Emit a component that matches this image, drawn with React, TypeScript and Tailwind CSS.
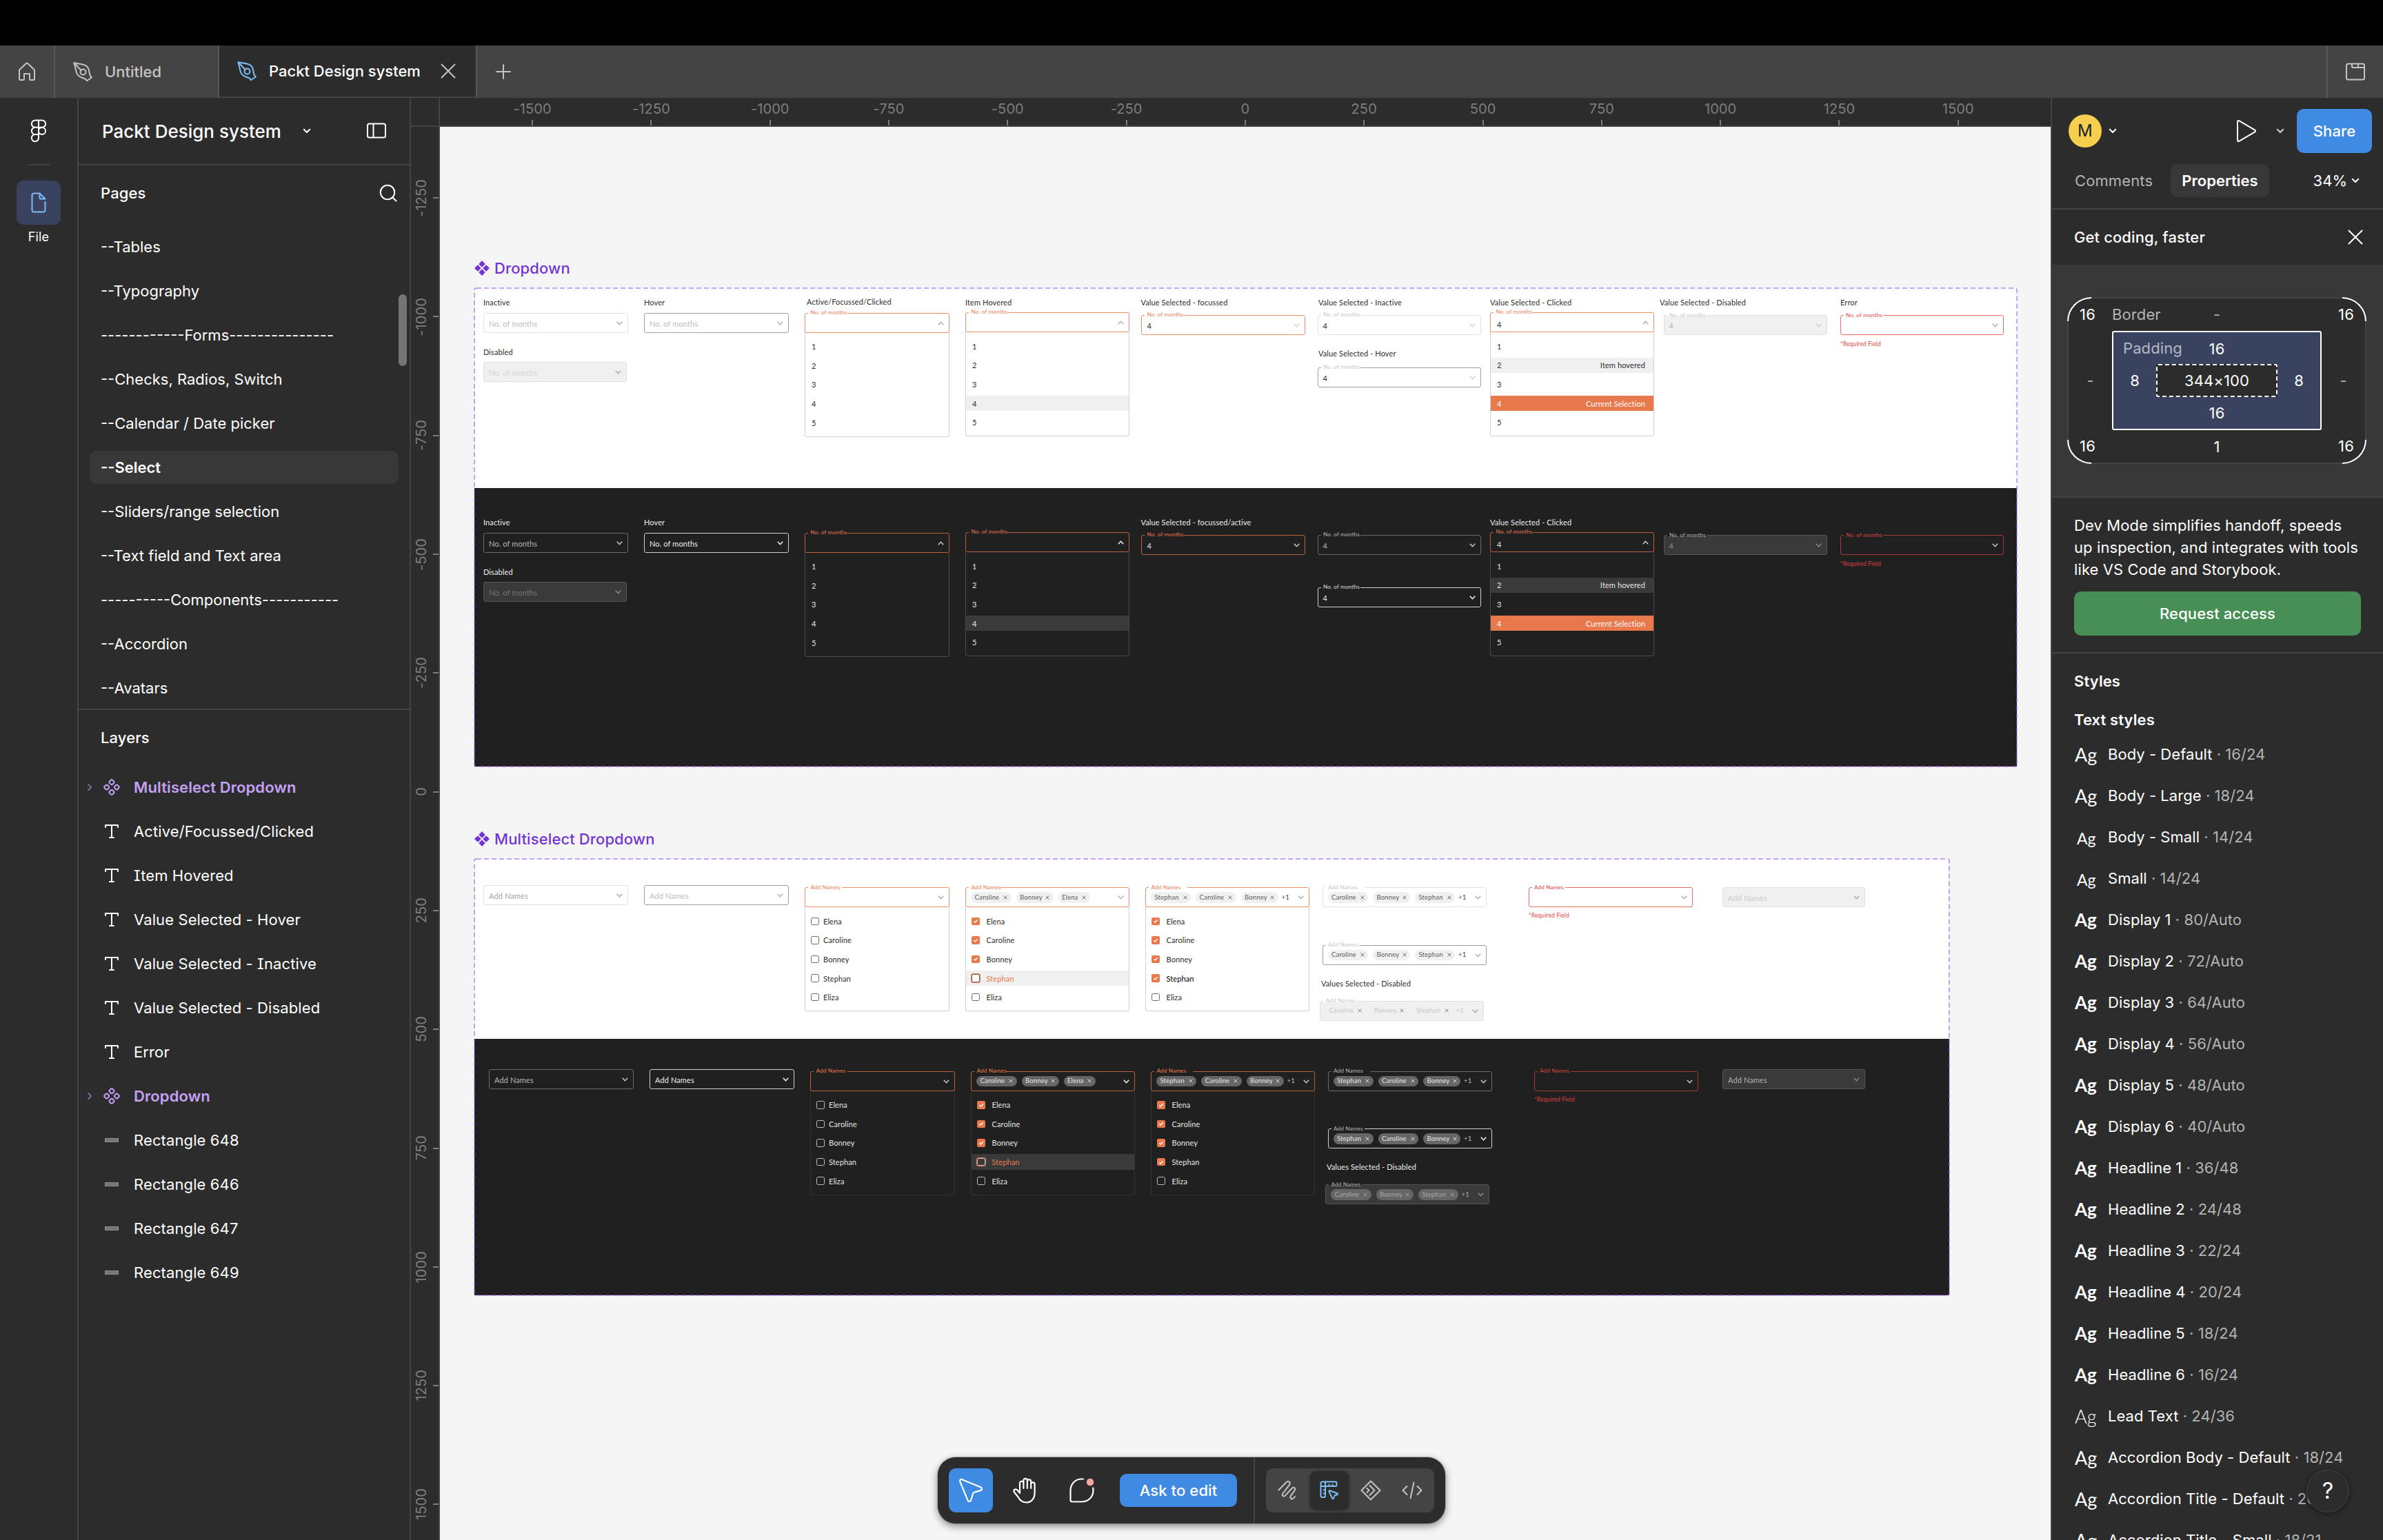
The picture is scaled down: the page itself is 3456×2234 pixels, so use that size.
import { ReactNode } from "react";
import clsx from "clsx";

const pages = [
  "--Tables",
  "--Typography",
  "------------Forms---------------",
  "--Checks, Radios, Switch",
  "--Calendar / Date picker",
  "--Select",
  "--Sliders/range selection",
  "--Text field and Text area",
  "----------Components-----------",
  "--Accordion",
  "--Avatars",
];

const layers = [
  { type: "component", name: "Multiselect Dropdown" },
  { type: "text", name: "Active/Focussed/Clicked" },
  { type: "text", name: "Item Hovered" },
  { type: "text", name: "Value Selected - Hover" },
  { type: "text", name: "Value Selected - Inactive" },
  { type: "text", name: "Value Selected - Disabled" },
  { type: "text", name: "Error" },
  { type: "component", name: "Dropdown" },
  { type: "rect", name: "Rectangle 648" },
  { type: "rect", name: "Rectangle 646" },
  { type: "rect", name: "Rectangle 647" },
  { type: "rect", name: "Rectangle 649" },
];

const textStyles = [
  { name: "Body - Default", size: "16/24", ag: "text-[27px]" },
  { name: "Body - Large", size: "18/24", ag: "text-[27px]" },
  { name: "Body - Small", size: "14/24", ag: "text-[23px] pt-1 pl-[3px]" },
  { name: "Small", size: "14/24", ag: "text-[23px] pt-1 pl-[3px]" },
  { name: "Display 1", size: "80/Auto", ag: "text-[26px] font-bold" },
  { name: "Display 2", size: "72/Auto", ag: "text-[26px] font-bold" },
  { name: "Display 3", size: "64/Auto", ag: "text-[26px] font-bold" },
  { name: "Display 4", size: "56/Auto", ag: "text-[26px] font-bold" },
  { name: "Display 5", size: "48/Auto", ag: "text-[26px] font-bold" },
  { name: "Display 6", size: "40/Auto", ag: "text-[26px] font-bold" },
  { name: "Headline 1", size: "36/48", ag: "text-[26px] font-bold" },
  { name: "Headline 2", size: "24/48", ag: "text-[26px] font-bold" },
  { name: "Headline 3", size: "22/24", ag: "text-[26px] font-bold" },
  { name: "Headline 4", size: "20/24", ag: "text-[26px] font-bold" },
  { name: "Headline 5", size: "18/24", ag: "text-[26px] font-bold" },
  { name: "Headline 6", size: "16/24", ag: "text-[26px] font-bold" },
  { name: "Lead Text", size: "24/36", ag: "text-[27px] font-light" },
  { name: "Accordion Body - Default", size: "18/24", ag: "text-[27px]" },
  { name: "Accordion Title - Default", size: "20/24", ag: "text-[27px]" },
  { name: "Accordion Title - Small", size: "18/21", ag: "text-[27px]" },
];

const rulerX = [-1500, -1250, -1000, -750, -500, -250, 0, 250, 500, 750, 1000, 1250, 1500];
const rulerY = [-1250, -1000, -750, -500, -250, 0, 250, 500, 750, 1000, 1250, 1500];

/* ---------- icons ---------- */

interface IconProps {
  w: number;
  h: number;
  className?: string;
  sw?: number;
  children: ReactNode;
}

function Icon({ w, h, className, sw = 2, children }: IconProps) {
  return (
    <svg
      width={w}
      height={h}
      viewBox={`0 0 ${w} ${h}`}
      fill="none"
      stroke="currentColor"
      strokeWidth={sw}
      strokeLinecap="round"
      strokeLinejoin="round"
      className={clsx("shrink-0", className)}
    >
      {children}
    </svg>
  );
}

function PenIcon({ className }: { className?: string }) {
  return (
    <Icon w={30} h={30} className={className}>
      <path d="M2.5 2.2L15 4.6c5 1 8 3.600 9 8.400l1.500 7.500 2.500 2.800-7.200 5-1.800-2.800-5.500-2C9.500 22 7.200 20 6 16.500z" />
      <path d="M2.500 2.200l10.300 11" />
      <circle cx="15.500" cy="15.500" r="4" />
    </Icon>
  );
}

function Chevron({ className }: { className?: string }) {
  return (
    <Icon w={12} h={8} className={className}>
      <path d="M1.800 1.800L6 6l4.200-4.200" />
    </Icon>
  );
}

function Cross({ className }: { className?: string }) {
  return (
    <Icon w={22} h={22} className={className}>
      <path d="M1.500 1.500l19 19M20.500 1.500l-19 19" />
    </Icon>
  );
}

function FilledComponent() {
  return (
    <svg width="22" height="22" viewBox="0 0 22 22" fill="currentColor">
      <path d="M11 0l4.700 4.900L11 9.800 6.300 4.900zM11 12.200l4.700 4.900L11 22l-4.700-4.900zM4.900 6.300L9.800 11l-4.900 4.700L0 11zM17.100 6.300L22 11l-4.900 4.700-4.900-4.700z" />
    </svg>
  );
}

function LayerIcon({ type }: { type: string }) {
  if (type === "component") {
    return (
      <Icon w={24} h={24} className="text-[#c4a1f5]">
        <rect x="9" y="1.700" width="6" height="6" rx="2" transform="rotate(45 12 4.700)" />
        <rect x="9" y="16.300" width="6" height="6" rx="2" transform="rotate(45 12 19.300)" />
        <rect x="1.700" y="9" width="6" height="6" rx="2" transform="rotate(45 4.700 12)" />
        <rect x="16.300" y="9" width="6" height="6" rx="2" transform="rotate(45 19.300 12)" />
      </Icon>
    );
  }
  if (type === "text") {
    return (
      <Icon w={24} h={24} className="text-white">
        <path d="M3 6V3h18v3M12 3v18M9 21h6" />
      </Icon>
    );
  }
  return <div className="mx-0.5 h-1.5 w-5 border border-[#8f8f8f] bg-[#767676]" />;
}

/* ---------- canvas pieces ---------- */

interface TxtProps {
  x: number;
  y: number;
  className?: string;
  children: ReactNode;
}

// y is the vertical centre of the line
function Txt({ x, y, className, children }: TxtProps) {
  return (
    <span
      className={clsx(
        "absolute -translate-y-1/2 leading-none whitespace-nowrap",
        className,
      )}
      style={{ left: x, top: y }}
    >
      {children}
    </span>
  );
}

interface FieldProps {
  x: number;
  y: number;
  w: number;
  h?: number;
  box: string;
  icon: string;
  up?: boolean;
  legend?: string;
  legendText?: string;
  gap?: number;
  bg?: string;
  children?: ReactNode;
}

function Field({
  x,
  y,
  w,
  h = 29,
  box,
  icon,
  up,
  legend,
  legendText,
  gap = 57,
  bg = "bg-white",
  children,
}: FieldProps) {
  return (
    <div
      className="absolute"
      style={{ left: x, top: y, width: w, height: h }}
    >
      <div className={clsx("absolute inset-0 rounded-[3px] border", box)} />
      {legend && (
        <>
          <div
            className={clsx("absolute -top-px left-[5px] h-[3px]", bg)}
            style={{ width: gap }}
          />
          <Txt x={8.500} y={-0.500} className={clsx("text-[8.250px]", legendText)}>
            {legend}
          </Txt>
        </>
      )}
      {children}
      <svg
        width="9"
        height="6"
        viewBox="0 0 9 6"
        fill="none"
        stroke="currentColor"
        strokeWidth="1.400"
        className={clsx("absolute top-[12px] right-2", icon, up && "rotate-180")}
      >
        <path d="M0.800 0.800l3.700 4 3.700-4" />
      </svg>
    </div>
  );
}

interface ThemeStyles {
  bg: string;
  title: string;
  idleBox: string;
  idleText: string;
  idleIcon: string;
  hoverBox: string;
  hoverText: string;
  hoverIcon: string;
  offBox: string;
  offText: string;
  offIcon: string;
  activeBox: string;
  activeText: string;
  errorBox: string;
  errorText: string;
  legend: string;
  hoverLegend: string;
  value: string;
  list: string;
  band: string;
  chip: string;
  check: string;
}

const light: ThemeStyles = {
  bg: "bg-white",
  title: "text-[#2e2e2e]",
  idleBox: "border-[#e2e2e2]",
  idleText: "text-[#bdbdbd]",
  idleIcon: "text-[#a8a8a8]",
  hoverBox: "border-[#9e9e9e]",
  hoverText: "text-[#bdbdbd]",
  hoverIcon: "text-[#b0b0b0]",
  offBox: "border-[#e0e0e0] bg-[#f0f0f0]",
  offText: "text-[#d4d4d4]",
  offIcon: "text-[#a8a8a8]",
  activeBox: "border-[#ec8f6a]",
  activeText: "text-[#ec8057]",
  errorBox: "border-[#ea6d6a]",
  errorText: "text-[#e5484d]",
  legend: "text-[#c8c8c8]",
  hoverLegend: "text-[#c8c8c8]",
  value: "text-[#2e2e2e]",
  list: "border-[#d0d0d0]",
  band: "bg-[#f0f0f0]",
  chip: "bg-[#f0f0f0] text-[#5c5c5c]",
  check: "border-[#6a6a6a]",
};

const dark: ThemeStyles = {
  bg: "bg-[#202020]",
  title: "text-[#ededed]",
  idleBox: "border-[#6b6b6b]",
  idleText: "text-[#b5b5b5]",
  idleIcon: "text-[#cccccc]",
  hoverBox: "border-[#d0d0d0]",
  hoverText: "text-[#ededed]",
  hoverIcon: "text-white",
  offBox: "border-[#565656] bg-[#3a3a3a]",
  offText: "text-[#757575]",
  offIcon: "text-[#8c8c8c]",
  activeBox: "border-[#b9603e]",
  activeText: "text-[#e8794d]",
  errorBox: "border-[#a33b37]",
  errorText: "text-[#d9403f]",
  legend: "text-[#b5b5b5]",
  hoverLegend: "text-[#dedede]",
  value: "text-[#e6e6e6]",
  list: "border-[#4a4a4a]",
  band: "bg-[#3a3a3a]",
  chip: "bg-[#666666] text-[#e8e8e8]",
  check: "border-[#bdbdbd]",
};

function NumberList({
  x,
  y,
  w,
  t,
  hovered,
  current,
}: {
  x: number;
  y: number;
  w: number;
  t: ThemeStyles;
  hovered?: number;
  current?: number;
}) {
  return (
    <div
      className={clsx(
        "absolute flex h-[152px] flex-col rounded-b-[3px] border border-t-0 pt-[7.500px] text-[11px] leading-none",
        t.list,
        t.value,
      )}
      style={{ left: x, top: y, width: w }}
    >
      {[1, 2, 3, 4, 5].map((n) => (
        <div key={n} className="flex h-[27.600px] items-center">
          <div
            className={clsx(
              "flex h-[22.500px] flex-1 items-center justify-between pr-3 pl-[9px]",
              n === hovered && t.band,
              n === current && "bg-[#e8794d] text-white",
            )}
          >
            <span>{n}</span>
            {current && n === hovered && <span>Item hovered</span>}
            {n === current && <span>Current Selection</span>}
          </div>
        </div>
      ))}
    </div>
  );
}

function DropdownSet({ t }: { t: ThemeStyles }) {
  const isLight = t === light;
  const title = clsx("text-[11px]", t.title);
  const orange = { box: t.activeBox, legendText: t.activeText, bg: t.bg };
  const months = "No. of months";

  return (
    <div className={clsx("relative", !isLight && "top-[29px]")}>
      <Txt x={13} y={19.500} className={title}>Inactive</Txt>
      <Txt x={246} y={19.500} className={title}>Hover</Txt>
      <Txt x={13} y={91.500} className={title}>Disabled</Txt>
      {isLight && (
        <>
          <Txt x={482} y={19} className={title}>Active/Focussed/Clicked</Txt>
          <Txt x={712} y={19.500} className={title}>Item Hovered</Txt>
          <Txt x={1224} y={19.500} className={title}>Value Selected - Inactive</Txt>
          <Txt x={1224} y={93.500} className={title}>Value Selected - Hover</Txt>
          <Txt x={1719} y={19.500} className={title}>Value Selected - Disabled</Txt>
          <Txt x={1981} y={19.500} className={title}>Error</Txt>
        </>
      )}
      <Txt x={966.500} y={19.500} className={title}>
        {isLight ? "Value Selected - focussed" : "Value Selected - focussed/active"}
      </Txt>
      <Txt x={1473} y={19.500} className={title}>Value Selected - Clicked</Txt>

      <Field x={13} y={36} w={210} box={t.idleBox} icon={t.idleIcon}>
        <Txt x={8} y={15} className={clsx("text-[11px]", t.idleText)}>{months}</Txt>
      </Field>
      <Field x={246} y={36} w={210} box={t.hoverBox} icon={t.hoverIcon}>
        <Txt x={8} y={15} className={clsx("text-[11px]", t.hoverText)}>{months}</Txt>
      </Field>
      <Field x={13} y={107} w={207.500} box={t.offBox} icon={t.offIcon}>
        <Txt x={8} y={15} className={clsx("text-[11px]", t.offText)}>{months}</Txt>
      </Field>

      <NumberList x={479} y={63.500} w={210} t={t} />
      <Field x={479} y={35.500} w={210} {...orange} icon={t.idleIcon} up legend={months} />

      <NumberList x={712} y={63} w={238} t={t} hovered={4} />
      <Field x={712} y={34.500} w={238} {...orange} icon={t.hoverIcon} up legend={months} />

      <Field x={967} y={38.500} w={237.500} {...orange} icon={isLight ? "text-[#cfcfcf]" : t.idleIcon} legend={months}>
        <Txt x={8.500} y={15} className={clsx("text-[11px]", t.value)}>4</Txt>
      </Field>
      <Field
        x={1222.500}
        y={38.500}
        w={237.500}
        box={t.idleBox}
        icon={isLight ? "text-[#cfcfcf]" : t.idleIcon}
        legend={months}
        legendText={t.legend}
        bg={t.bg}
      >
        <Txt x={8} y={15} className={clsx("text-[11px]", isLight ? t.value : t.idleText)}>4</Txt>
      </Field>
      <Field
        x={1222.500}
        y={114.500}
        w={237.500}
        box={t.hoverBox}
        icon={isLight ? "text-[#cfcfcf]" : t.hoverIcon}
        legend={months}
        legendText={t.hoverLegend}
        bg={t.bg}
      >
        <Txt x={8} y={15} className={clsx("text-[11px]", t.value)}>4</Txt>
      </Field>

      <NumberList x={1473} y={63} w={238} t={t} hovered={2} current={4} />
      <Field x={1473} y={34.500} w={238} {...orange} icon={t.idleIcon} up legend={months}>
        <Txt x={10} y={17} className={clsx("text-[11px]", t.value)}>4</Txt>
      </Field>

      <Field
        x={1724.500}
        y={39}
        w={237.500}
        box={t.offBox}
        icon={isLight ? "text-[#cfcfcf]" : t.offIcon}
        legend={months}
        legendText={t.legend}
        bg={t.bg}
      >
        <Txt x={8} y={15} className={clsx("text-[11px]", isLight ? "text-[#b5b5b5]" : "text-[#8c8c8c]")}>4</Txt>
      </Field>

      <Field x={1980.500} y={39} w={237.500} box={t.errorBox} icon={t.idleIcon} legend={months} legendText={t.errorText} bg={t.bg} />
      <Txt x={1981} y={80.500} className={clsx("text-[8.500px]", t.errorText)}>*Required Field</Txt>
    </div>
  );
}

const names = ["Elena", "Caroline", "Bonney", "Stephan", "Eliza"];

function Checkbox({ checked, focus, t }: { checked: boolean; focus: boolean; t: ThemeStyles }) {
  if (checked) {
    return (
      <div className="flex size-[11.500px] items-center justify-center rounded-[2px] bg-[#e8794d]">
        <svg width="8" height="8" viewBox="0 0 8 8" fill="none" stroke="#fff" strokeWidth="1.400">
          <path d="M1.300 4.200l1.900 1.800L6.800 2.200" />
        </svg>
      </div>
    );
  }
  return (
    <div
      className={clsx(
        "size-[11.500px] rounded-[2.500px] border",
        t.check,
        focus && "ring-1 ring-[#e8794d]",
        focus && t === light && "bg-white",
      )}
    />
  );
}

function NameList({
  x,
  w,
  t,
  checked,
  hovered,
  gap,
}: {
  x: number;
  w: number;
  t: ThemeStyles;
  checked: number;
  hovered?: number;
  gap: string;
}) {
  return (
    <div
      className={clsx(
        "absolute top-[69px] flex h-[152px] flex-col rounded-b-[3px] border border-t-0 pt-[7.500px] text-[11px] leading-none",
        t === light ? t.list : "border-[#333333]",
        t.value,
      )}
      style={{ left: x, width: w }}
    >
      {names.map((name, i) => (
        <div key={name} className="flex h-[27.600px] items-center">
          <div
            className={clsx(
              "flex h-[22.500px] flex-1 items-center pl-2",
              gap,
              i === hovered && t.band,
              i === hovered && "text-[#e8794d]",
            )}
          >
            <Checkbox checked={i < checked} focus={i === hovered} t={t} />
            <span className={clsx(i === 3 && checked === 4 && t === light && "text-black")}>{name}</span>
          </div>
        </div>
      ))}
    </div>
  );
}

const chipWidths: Record<string, string> = {
  Caroline: "w-[58.500px]",
  Bonney: "w-[54px]",
  Elena: "w-[46px]",
  Stephan: "w-[58px]",
};

function Chips({
  items,
  chip,
  more,
  cross,
}: {
  items: string[];
  chip: string;
  more?: string;
  cross?: string;
}) {
  return (
    <div className="absolute top-[7px] left-2 flex items-center gap-[7px] text-[9.600px] leading-none">
      {items.map((item) => (
        <div
          key={item}
          className={clsx(
            "flex h-[15.500px] items-center justify-between rounded-full pr-[5.500px] pl-[5.500px]",
            chipWidths[item],
            chip,
          )}
        >
          {item}
          <svg width="6" height="6" viewBox="0 0 6 6" stroke="currentColor" strokeWidth="0.900" className={cross}>
            <path d="M0.500 0.500l5 5M5.500 0.500l-5 5" />
          </svg>
        </div>
      ))}
      {more && <span className={clsx("-ml-0.5", more)}>+1</span>}
    </div>
  );
}

function MultiselectSet({ t }: { t: ThemeStyles }) {
  const isLight = t === light;
  const orange = { box: t.activeBox, legendText: t.activeText, bg: t.bg };
  const add = "Add Names";
  const more = isLight ? "text-[#4a4a4a]" : "text-[#bdbdbd]";
  const order = isLight ? ["Caroline", "Bonney", "Stephan"] : ["Stephan", "Caroline", "Bonney"];

  return (
    <>
      <div className={clsx("relative", !isLight && "top-[5.500px] left-2")}>
        <Field x={13} y={38} w={210} box={t.idleBox} icon={t.idleIcon}>
          <Txt x={8} y={15} className={clsx("text-[11px]", isLight ? "text-[#a3a3a3]" : t.idleText)}>{add}</Txt>
        </Field>
        <Field x={246} y={38} w={210} box={t.hoverBox} icon={t.hoverIcon}>
          <Txt x={8} y={15} className={clsx("text-[11px]", t.hoverText)}>{add}</Txt>
        </Field>

        <NameList x={479} w={210} t={t} checked={0} gap="gap-[6.500px]" />
        <Field x={479} y={41} w={210} {...orange} icon={t.idleIcon} legend={add} gap={49} />

        <NameList x={712} w={238} t={t} checked={3} hovered={3} gap="gap-2.5" />
        <Field x={712} y={41} w={238} {...orange} icon={t.hoverIcon} legend={add} gap={46}>
          <Chips items={["Caroline", "Bonney", "Elena"]} chip={t.chip} />
        </Field>

        <NameList x={973} w={238} t={t} checked={4} gap="gap-2.5" />
        <Field x={973} y={41} w={238} {...orange} icon={t.idleIcon} legend={add} gap={56}>
          <Chips items={["Stephan", "Caroline", "Bonney"]} chip={t.chip} more={more} />
        </Field>

        <Field x={1229.500} y={41} w={238} box={t.idleBox} icon={t.idleIcon} legend={add} legendText={t.legend} gap={56} bg={t.bg}>
          <Chips items={order} chip={t.chip} more={more} />
        </Field>
        <Field x={1229.500} y={124.500} w={238} box={t.hoverBox} icon={t.hoverIcon} legend={add} legendText={t.legend} gap={48} bg={t.bg}>
          <Chips items={order} chip={t.chip} more={more} />
        </Field>
        <Txt x={1228} y={179.500} className={clsx("text-[11px]", t.title)}>Values Selected - Disabled</Txt>
        <Field x={1226} y={205.500} w={238} box={t.offBox} icon={t.offIcon} legend={add} legendText={t.legend} gap={48} bg={t.bg}>
          <Chips
            items={["Caroline", "Bonney", "Stephan"]}
            chip={isLight ? "text-[#c8c8c8]" : "bg-[#666666] text-[#a8a8a8]"}
            more={isLight ? "text-[#c8c8c8]" : "text-[#a8a8a8]"}
            cross={isLight ? "text-[#7a7a7a]" : undefined}
          />
        </Field>

        <Field x={1528.500} y={41} w={238} box={t.errorBox} icon={t.idleIcon} legend={add} legendText={t.errorText} gap={48} bg={t.bg} />
        <Txt x={1529} y={82} className={clsx("text-[8.500px]", t.errorText)}>*Required Field</Txt>
      </div>
      <Field x={1809.500} y={isLight ? 41 : 43.500} w={207.500} box={t.offBox} icon={t.offIcon}>
        <Txt x={8.500} y={15} className={clsx("text-[11px]", isLight ? "text-[#cccccc]" : "text-[#b0b0b0]")}>{add}</Txt>
      </Field>
    </>
  );
}

function DashedOutline() {
  return (
    <svg className="absolute inset-0 h-full w-full overflow-visible">
      <rect
        width="100%"
        height="100%"
        rx="3"
        fill="none"
        stroke="#9a5cf0"
        strokeOpacity="0.750"
        strokeWidth="1.500"
        strokeDasharray="7 4"
      />
    </svg>
  );
}

function FrameTitle({ className, children }: { className: string; children: ReactNode }) {
  return (
    <div
      className={clsx(
        "absolute left-[50px] flex items-center gap-[7px] font-[Inter,sans-serif] text-[22px] leading-[26px] text-[#7434d4]",
        className,
      )}
    >
      <FilledComponent />
      <span className="font-[450]">{children}</span>
    </div>
  );
}

function Canvas() {
  return (
    <div className="relative flex-1 overflow-hidden bg-[#f5f5f5] font-[Lato,sans-serif]">
      <FrameTitle className="top-[192px]">Dropdown</FrameTitle>
      <section className="absolute top-[234px] left-[50px] w-[2237px]">
        <div className="relative h-[290px] bg-white">
          <DropdownSet t={light} />
        </div>
        <div className="relative h-[404px] bg-[#202020]">
          <DropdownSet t={dark} />
        </div>
        <DashedOutline />
      </section>

      <FrameTitle className="top-[1020px]">Multiselect Dropdown</FrameTitle>
      <section className="absolute top-[1062px] left-[50px] w-[2139px]">
        <div className="relative h-[261px] bg-white">
          <MultiselectSet t={light} />
        </div>
        <div className="relative h-[372px] bg-[#202020]">
          <MultiselectSet t={dark} />
        </div>
        <DashedOutline />
      </section>
    </div>
  );
}

/* ---------- chrome ---------- */

function TabBar() {
  return (
    <header className="flex h-[76px] shrink-0 items-center bg-[#444444] font-medium tracking-normal text-[#c4c4c4]">
      <div className="flex h-full w-20 items-center justify-center border-r-2 border-[#575757]">
        <Icon w={26} h={28}>
          <path d="M2 11.500L11.500 2.200a2.200 2.200 0 0 1 3 0L24 11.500V24.500A1.500 1.500 0 0 1 22.500 26H18a1 1 0 0 1-1-1v-8h-8v8a1 1 0 0 1-1 1H3.500A1.500 1.500 0 0 1 2 24.500z" />
        </Icon>
      </div>
      <div className="flex h-full w-[238px] items-center gap-[17px] border-r-2 border-[#575757] pl-[25px]">
        <PenIcon />
        <span>Untitled</span>
      </div>
      <div className="flex h-full w-[374px] items-center border-r-2 border-b-2 border-r-[#575757] border-b-[#444444] bg-[#2c2c2c] pl-[25px] text-white">
        <PenIcon className="text-[#80bdf5]" />
        <span className="ml-[17px]">Packt Design system</span>
        <Cross className="mr-[29px] ml-auto text-[#c4c4c4]" />
      </div>
      <Icon w={22} h={22} className="ml-[27px]">
        <path d="M11 1v20M1 11h20" />
      </Icon>
      <div className="ml-auto flex h-full w-[82px] items-center justify-center border-l-2 border-[#575757]">
        <Icon w={30} h={26}>
          <rect x="2" y="1.500" width="26" height="23" rx="2.500" />
          <path d="M10 2v3.500a1.500 1.500 0 0 0 1.500 1.500H28M19 2v3.500" />
        </Icon>
      </div>
    </header>
  );
}

function Rail() {
  return (
    <nav className="flex w-[114px] shrink-0 flex-col items-center border-r-2 border-[#444444] pt-[31px]">
      <Icon w={24} h={34} className="text-white">
        <path d="M12 1.500H7a5 5 0 0 0 0 10.300h5zM12 1.500h5a5 5 0 0 1 0 10.300h-5zM12 11.800H7a5 5 0 0 0 0 10.300h5zM12 22.100H7a5.100 5.100 0 1 0 5 5.100z" />
        <circle cx="17" cy="17" r="5.100" />
      </Icon>
      <div className="mt-[31px] h-0.5 w-8 bg-[#444444]" />
      <div className="mt-[22px] flex size-16 items-center justify-center rounded-[10px] bg-[#394360] text-[#80bdf5]">
        <Icon w={22} h={30}>
          <path d="M12.500 1.500H4A2.500 2.500 0 0 0 1.500 4v22A2.500 2.500 0 0 0 4 28.500h14a2.500 2.500 0 0 0 2.500-2.500V14M12.500 1.500l8 8h-6.500a1.500 1.500 0 0 1-1.500-1.500z" />
        </Icon>
      </div>
      <span className="mt-[7px] text-[18px] leading-[22px]">File</span>
    </nav>
  );
}

function LeftPanel() {
  return (
    <aside className="flex w-[482px] shrink-0 flex-col border-r-2 border-[#444444]">
      <div className="flex h-[98px] shrink-0 items-center border-b-2 border-[#444444] pr-[33px] pl-[34px]">
        <span className="text-[26px] font-medium tracking-normal">Packt Design system</span>
        <Chevron className="ml-[31px]" />
        <Icon w={30} h={24} className="ml-auto">
          <rect x="2" y="1.500" width="26" height="20" rx="2.500" />
          <path d="M10.500 2v19" />
        </Icon>
      </div>
      <div className="flex h-20 shrink-0 items-center justify-between pr-[18px] pl-8">
        <span className="font-medium">Pages</span>
        <Icon w={26} h={26}>
          <circle cx="12" cy="12" r="10.200" />
          <path d="M19.500 19.500l5 5" />
        </Icon>
      </div>
      <div className="relative h-[710px] shrink-0 overflow-hidden border-b-2 border-[#444444] px-4 pt-1.5 tracking-normal">
        {pages.map((page) => (
          <div key={page} className="flex h-16 items-center">
            <div
              className={clsx(
                "flex h-12 flex-1 items-center rounded-[10px] px-4",
                page === "--Select" && "bg-[#383838] font-semibold",
              )}
            >
              {page}
            </div>
          </div>
        ))}
        <div className="absolute top-[107px] right-1 h-[104px] w-3 rounded-full bg-[#757575]" />
      </div>
      <div className="flex h-20 shrink-0 items-center pl-8 font-medium">Layers</div>
      {layers.map((layer) => (
        <div key={layer.name} className="flex h-16 shrink-0 items-center pl-3">
          <div className="flex w-6 items-center">
            {layer.type === "component" && (
              <Icon w={8} h={12} className="text-[#7b6798]">
                <path d="M2 1.800L6.200 6 2 10.200" />
              </Icon>
            )}
          </div>
          <LayerIcon type={layer.type} />
          <span
            className={clsx(
              "ml-5",
              layer.type === "component" && "font-semibold text-[#c4a1f5]",
            )}
          >
            {layer.name}
          </span>
        </div>
      ))}
    </aside>
  );
}

function Corner({ className }: { className: string }) {
  return <div className={clsx("absolute size-[35px] border-white", className)} />;
}

function BoxModel() {
  return (
    <div className="flex h-[338px] shrink-0 items-center justify-center border-b-2 border-[#444444] bg-[#383838] pr-0.5">
      <div className="relative flex h-[242px] w-[434px] flex-col rounded-[35px] border-2 border-[#444444] bg-[#2c2c2c]">
        <Corner className="-top-0.5 -left-0.5 rounded-tl-[35px] border-t-2 border-l-2" />
        <Corner className="-top-0.5 -right-0.5 rounded-tr-[35px] border-t-2 border-r-2" />
        <Corner className="-bottom-0.5 -left-0.5 rounded-bl-[35px] border-b-2 border-l-2" />
        <Corner className="-right-0.5 -bottom-0.5 rounded-br-[35px] border-r-2 border-b-2" />
        <div className="grid h-12 grid-cols-[63px_1fr_63px] items-center text-center">
          <span className="pr-2">16</span>
          <div className="grid grid-cols-3">
            <span className="text-left text-[#b3b3b3]">Border</span>
            <span className="text-[#b3b3b3]">-</span>
          </div>
          <span className="pl-2">16</span>
        </div>
        <div className="grid grid-cols-[63px_1fr_63px] items-center text-center">
          <span className="text-[#b3b3b3]">-</span>
          <div className="grid h-[144px] grid-cols-[62px_1fr_62px] grid-rows-[46px_48px_46px] items-center rounded-[3px] border-2 border-white bg-[#394360]">
            <span className="pl-3.5 text-left text-[#b4b8c4]">Padding</span>
            <span className="pt-0.5">16</span>
            <span />
            <span>8</span>
            <div className="flex h-12 items-center justify-center rounded-[3px] border-2 border-dashed border-white bg-[#2c2c2c]">
              344×100
            </div>
            <span>8</span>
            <span />
            <span>16</span>
          </div>
          <span className="text-[#b3b3b3]">-</span>
        </div>
        <div className="grid h-12 grid-cols-[63px_1fr_63px] items-center text-center">
          <span className="pr-2">16</span>
          <span className="pt-0.5">1</span>
          <span className="pl-2">16</span>
        </div>
      </div>
    </div>
  );
}

function RightPanel() {
  return (
    <aside className="flex w-[482px] shrink-0 flex-col border-l-2 border-[#444444]">
      <div className="flex h-24 shrink-0 items-center pr-4 pl-6">
        <div className="flex size-12 items-center justify-center rounded-full bg-[#f7cf4f] text-[24px] text-[#1e1e1e]">
          M
        </div>
        <Chevron className="ml-2.5" />
        <Icon w={30} h={34} className="ml-auto">
          <path d="M2 3.500c0-1.300 1-1.900 2.200-1.300l23 13.400c1.200.7 1.200 2 0 2.700l-23 13.500c-1.200.6-2.200 0-2.200-1.300z" />
        </Icon>
        <Chevron className="ml-7 text-[#d0d0d0]" />
        <button className="ml-[18px] h-16 w-[109px] rounded-[10px] bg-[#3f8ae2] font-medium">
          Share
        </button>
      </div>
      <div className="flex h-[66px] shrink-0 items-start border-b-2 border-[#444444] pr-[34px] pl-[33px]">
        <span className="w-[114px] leading-[48px] text-[#b3b3b3]">Comments</span>
        <div className="ml-[25px] flex h-12 w-[143px] items-center justify-center rounded-[10px] bg-[#383838] font-semibold tracking-normal">
          Properties
        </div>
        <div className="ml-auto flex h-12 items-center gap-1.5 tracking-normal">
          34%
          <Chevron />
        </div>
      </div>
      <div className="flex h-20 shrink-0 items-center justify-between pr-[29px] pl-8 font-[550]">
        Get coding, faster
        <Cross />
      </div>
      <BoxModel />
      <div className="shrink-0 border-b-2 border-[#444444] px-8 pt-6 pb-6">
        <p className="leading-8">
          Dev Mode simplifies handoff, speeds
          <br />
          up inspection, and integrates with tools
          <br />
          like VS Code and Storybook.
        </p>
        <button className="mt-4 block h-16 w-[416px] rounded-[10px] bg-[#478f57] font-medium">
          Request access
        </button>
      </div>
      <div className="flex h-20 shrink-0 items-center pl-8 font-semibold">Styles</div>
      <div className="flex h-9 shrink-0 items-start pl-8 leading-8 font-semibold">Text styles</div>
      {textStyles.map((style) => (
        <div key={style.name} className="flex h-[60px] shrink-0 items-center pl-[33px] tracking-[0.050px]">
          <span className={clsx("w-12 font-[Lato,sans-serif] leading-none tracking-normal", style.ag)}>
            Ag
          </span>
          <span>{style.name}</span>
          <span className="whitespace-pre text-[#b3b3b3]"> · {style.size}</span>
        </div>
      ))}
    </aside>
  );
}

function Rulers({ children }: { children: ReactNode }) {
  return (
    <main className="flex min-w-0 flex-1 flex-col text-[20px] text-[#7d7d7d]">
      <div className="flex h-[42px] shrink-0 border-b-2 border-[#444444]">
        <div className="w-[42px] shrink-0 border-r-2 border-[#444444]" />
        <div className="flex overflow-hidden pl-[48px]">
          {rulerX.map((n) => (
            <div key={n} className="flex w-[172.300px] shrink-0 flex-col items-center justify-between">
              <span className="leading-8">{n}</span>
              <div className="h-2 w-0.5 bg-[#7d7d7d]" />
            </div>
          ))}
        </div>
      </div>
      <div className="flex min-h-0 flex-1">
        <div className="flex w-[42px] shrink-0 flex-col overflow-hidden border-r-2 border-[#444444] pt-[17px]">
          {rulerY.map((n) => (
            <div key={n} className="flex h-[172.300px] shrink-0 items-center justify-between">
              <span className="rotate-180 leading-[30px] [writing-mode:vertical-rl]">{n}</span>
              <div className="h-0.5 w-2 bg-[#7d7d7d]" />
            </div>
          ))}
        </div>
        {children}
      </div>
    </main>
  );
}

function Toolbar() {
  return (
    <div className="absolute bottom-6 left-[1360px] flex h-24 w-[736px] items-center rounded-[26px] bg-[#2c2c2c] px-4 shadow-[0_4px_12px_rgba(0,0,0,0.450),0_0_2px_rgba(0,0,0,0.600)]">
      <div className="flex size-16 items-center justify-center rounded-[10px] bg-[#3f8ae2]">
        <Icon w={36} h={36} sw={2.200}>
          <path d="M2.200 5.200c-.7-2 1-3.800 3-3L32.500 13.400c2.200 1 2 4-.3 4.700L23 20.800c-.9.300-1.600.9-1.900 1.800l-3 9.700c-.7 2.300-3.800 2.300-4.600.1z" />
        </Icon>
      </div>
      <Icon w={38} h={38} className="ml-7" sw={2.200}>
        <path d="M11 23V8.500a2.700 2.700 0 0 1 5.400 0V16M16.400 16V4.500a2.700 2.700 0 0 1 5.400 0V16M21.800 16V6a2.700 2.700 0 0 1 5.400 0v10M27.200 16v-6a2.700 2.700 0 0 1 5.400 0v12.500C32.600 31 27.500 36.500 20.500 36.500c-6 0-9.500-3-12-8L2.800 21.500c-1.600-3.500 2.200-5.600 4.500-3l3.700 4.500" />
      </Icon>
      <Icon w={38} h={38} className="ml-11" sw={2.200}>
        <path d="M21 2.500h-2C9.500 2.500 2.500 9.500 2.500 19v14a2.500 2.500 0 0 0 2.500 2.500h14c9.500 0 16.500-7 16.500-16.500 0-1.300-.1-2.200-.4-3.500" />
        <circle cx="31" cy="7" r="5.200" fill="#f4a79b" stroke="none" />
      </Icon>
      <button className="ml-9 h-12 w-[170px] rounded-[10px] bg-[#3f8ae2] font-medium">
        Ask to edit
      </button>
      <div className="ml-6 h-24 w-0.5 bg-[#444444]" />
      <div className="ml-auto flex h-16 w-[244px] items-center rounded-[10px] bg-[#444444] text-[#c4c4c4]">
        <div className="flex w-16 justify-center pr-0.5">
          <Icon w={28} h={30}>
            <path d="M1.500 14.500L12.500 3.200c3-2.900 6.700.2 4.500 3.600L7.500 19.500c-2.100 3.100 1 5.500 3.700 2.900L20.500 12c2.700-2.800 6 .1 4 3.200l-5.500 7.600c-2 3.300.9 6 3.500 3.700.9-.8 1.700-1.500 2.500-2.500" />
          </Icon>
        </div>
        <div className="flex h-14 w-14 items-center justify-center rounded-[9px] bg-[#2c2c2c] text-[#80bdf5] shadow-[0_1px_4px_rgba(0,0,0,0.500)]">
          <Icon w={28} h={28}>
            <path d="M8 8v14.500A1.500 1.500 0 0 1 6.500 24h-3A2 2 0 0 1 1.500 22V3.500a2 2 0 0 1 2-2h19a2 2 0 0 1 2 2v3A1.500 1.500 0 0 1 23 8zM1.500 8H8V1.500M13.500 5.500V8M18.500 5.500V8M5.500 13.500H8M5.500 18.500H8" />
            <path d="M13.500 15.500c-.3-.8.4-1.500 1.200-1.200l10.800 4.200c.9.400.8 1.600-.1 1.800l-3.800 1-1.700 4.400c-.4.900-1.600.8-1.800-.1z" />
          </Icon>
        </div>
        <div className="flex w-16 justify-center">
          <Icon w={30} h={30}>
            <path d="M15 1.500L28.500 15 15 28.500 1.500 15zM13.500 8l7 7-7 7M9.500 12l3 3-3 3" />
          </Icon>
        </div>
        <div className="flex w-[60px] justify-center pr-1">
          <Icon w={30} h={26}>
            <path d="M7.500 7L1.500 13l6 6M22.500 7l6 6-6 6M17.500 1.500l-5 23" />
          </Icon>
        </div>
      </div>
    </div>
  );
}

export default function App() {
  return (
    <div className="relative flex h-[2234px] w-[3456px] flex-col overflow-hidden border-t-[66px] border-black bg-[#2c2c2c] font-[Inter,sans-serif] text-[22px] tracking-[0.110px] text-white [font-feature-settings:'cv08']">
      <TabBar />
      <div className="flex min-h-0 flex-1">
        <Rail />
        <LeftPanel />
        <Rulers>
          <Canvas />
        </Rulers>
        <RightPanel />
      </div>
      <Toolbar />
      <div className="absolute right-[49px] bottom-10 flex size-[62px] items-center justify-center rounded-full border border-[#444444] bg-[#2c2c2c] text-[32px] shadow-[0_2px_8px_rgba(0,0,0,0.500)]">
        ?
      </div>
    </div>
  );
}
